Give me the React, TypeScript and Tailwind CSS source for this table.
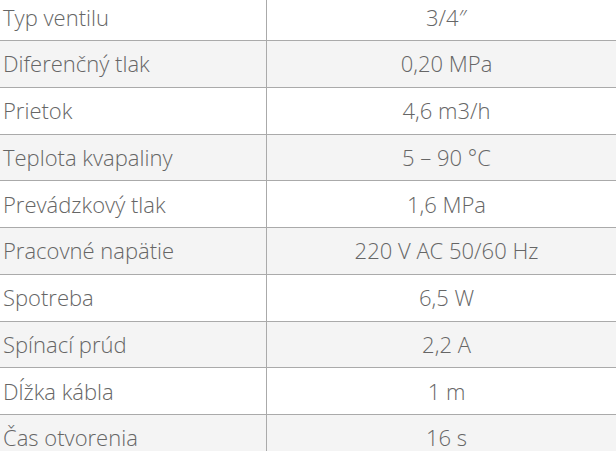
const rows: [string, string][] = [
  ["Typ ventilu", "3/4\u2033"],
  ["Diferenčný tlak", "0,20 MPa"],
  ["Prietok", "4,6 m3/h"],
  ["Teplota kvapaliny", "5 – 90 °C"],
  ["Prevádzkový tlak", "1,6 MPa"],
  ["Pracovné napätie", "220 V AC 50/60 Hz"],
  ["Spotreba", "6,5 W"],
  ["Spínací prúd", "2,2 A"],
  ["Dĺžka kábla", "1 m"],
  ["Čas otvorenia", "16 s"],
];

export default function App() {
  return (
    <div className="h-[451px] w-[616px] overflow-hidden bg-white">
      <div
        className="-mt-[5.75px] flex w-[626px] flex-col text-[22px] font-light text-[#666]"
        style={{ fontFamily: '"Open Sans", "Liberation Sans", sans-serif' }}
      >
        {rows.map(([label, value], i) => (
          <div
            key={label}
            className={`grid h-[46.75px] grid-cols-[267px_1fr] border-b border-[#aaa] ${
              i % 2 === 1 ? "bg-[#f4f4f4]" : "bg-white"
            }`}
          >
            <div className="flex items-center border-r border-[#aaa] pl-[3px]">
              {label}
            </div>
            <div className="flex items-center justify-center">{value}</div>
          </div>
        ))}
      </div>
    </div>
  );
}
